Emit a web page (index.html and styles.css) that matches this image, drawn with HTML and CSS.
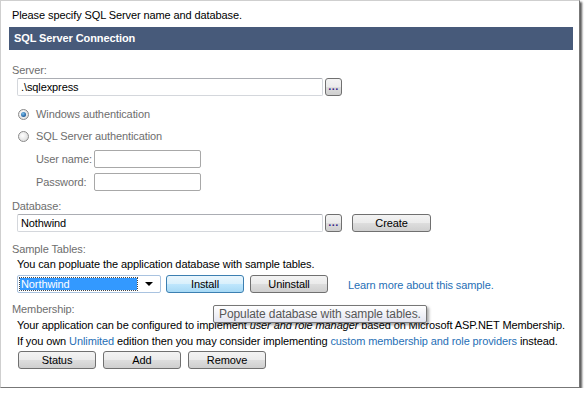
FILE: index.html
```html
<!DOCTYPE html>
<html>
<head>
<meta charset="utf-8">
<link rel="stylesheet" href="styles.css">
</head>
<body>
<div class="frame">
  <div class="intro">Please specify SQL Server name and database.</div>
  <div class="header">SQL Server Connection</div>

  <div class="label lbl-server">Server:</div>
  <div class="row">
    <div class="input wide">.\sqlexpress</div>
    <div class="btn dots">...</div>
  </div>

  <div class="radio-row r1"><span class="radio on"></span><span class="muted">Windows authentication</span></div>
  <div class="radio-row r2"><span class="radio"></span><span class="muted">SQL Server authentication</span></div>
  <div class="cred-row c1"><span class="cred-label muted">User name:</span><div class="input small"></div></div>
  <div class="cred-row c2"><span class="cred-label muted">Password:</span><div class="input small"></div></div>

  <div class="label lbl-db">Database:</div>
  <div class="row">
    <div class="input wide">Nothwind</div>
    <div class="btn dots">...</div>
    <div class="btn create">Create</div>
  </div>

  <div class="label lbl-sample">Sample Tables:</div>
  <div class="text t-sample">You can popluate the application database with sample tables.</div>
  <div class="row sample-row">
    <div class="select"><span class="sel-item">Northwind</span><span class="arrow"></span></div>
    <div class="btn mid hover">Install</div>
    <div class="btn mid uninstall">Uninstall</div>
    <a class="link learn">Learn more about this sample.</a>
  </div>

  <div class="label lbl-member">Membership:</div>
  <div class="member">
    <div class="text">Your application can be configured to implement <i>user and role manager</i> based on Microsoft ASP.NET Membership.</div>
    <div class="text">If you own <a class="link">Unlimited</a> edition then you may consider implementing <a class="link">custom membership and role providers</a> instead.</div>
    <div class="tooltip">Populate database with sample tables.</div>
  </div>
  <div class="row buttons">
    <div class="btn mid">Status</div>
    <div class="btn mid">Add</div>
    <div class="btn mid">Remove</div>
  </div>
</div>
</body>
</html>
```
FILE: styles.css
```css
* { box-sizing: border-box; }
html, body { margin: 0; padding: 0; background: #fff; }
body {
  font-family: "Liberation Sans", Arial, sans-serif;
  font-size: 11px;
  letter-spacing: -0.1px;
  color: #000;
  white-space: nowrap;
}
.frame {
  width: 580px;
  height: 388px;
  border-top: 1px solid #cfcfcf;
  border-left: 1px solid #cfcfcf;
  border-right: 1px solid #777;
  border-bottom: 1px solid #777;
  box-shadow: 2px 2px 2px rgba(0,0,0,0.65);
  padding: 7px 6px 0 8px;
  position: relative;
}
.intro { height: 14px; line-height: 14px; padding-left: 3px; }
.header {
  margin-top: 5px;
  height: 23px;
  width: 564px;
  background: #475a7a;
  color: #fff;
  font-weight: bold;
  line-height: 23px;
  padding-left: 5px;
}
.label { color: #6e6e6e; padding-left: 3px; height: 14px; line-height: 14px; }
.lbl-server { margin-top: 13px; }
.row { display: flex; align-items: center; margin-left: 8px; }
.input {
  height: 18px;
  border: 1px solid #d4d7dc;
  border-top-color: #abadb3;
  border-radius: 2px;
  line-height: 16px;
  padding-left: 3px;
  background: #fff;
}
.input.wide { width: 306px; margin-top: 1px; }
.input.small { width: 107px; border: 1px solid #a8a8a8; }
.btn {
  height: 18px;
  border: 1px solid #707070;
  border-radius: 3px;
  background: linear-gradient(#f3f3f3 0%, #ebebeb 48%, #dddddd 52%, #cfcfcf 100%);
  text-align: center;
  line-height: 16px;
  color: #000;
}
.btn.dots {
  width: 17px;
  margin-left: 2px;
  color: #3a2a8a;
  font-weight: bold;
  line-height: 14px;
  font-size: 11px;
  letter-spacing: 0.5px;
}
.btn.create { width: 79px; margin-left: 10px; }
.radio-row { display: flex; align-items: center; height: 22px; margin-left: 9px; }
.r1 { margin-top: 7px; }
.radio {
  width: 11px; height: 11px;
  border-radius: 50%;
  border: 1px solid #8a8a8a;
  background: radial-gradient(circle at 40% 40%, #fff 0%, #e6e6e6 60%, #cfcfcf 100%);
  margin-right: 7px;
  position: relative;
}
.radio.on::after {
  content: "";
  position: absolute;
  left: 2px; top: 2px;
  width: 5px; height: 5px;
  border-radius: 50%;
  background: radial-gradient(circle at 40% 35%, #7ec3f0 0%, #1f5d9c 70%, #0c3a6e 100%);
}
.muted { color: #6e6e6e; }
.cred-row { display: flex; align-items: center; margin-left: 27px; height: 23px; }
.cred-label { width: 58px; }
.lbl-db { margin-top: 6px; }
.lbl-db + .row { margin-top: 0px; }
.lbl-sample { margin-top: 10px; }
.text { height: 16px; line-height: 16px; padding-left: 8px; }
.t-sample { margin-top: 0px; }
.sample-row { margin-top: 3px; }
.select {
  width: 144px;
  height: 18px;
  border: 1px solid #a9c3e0;
  border-radius: 2px;
  position: relative;
  padding: 2px;
  background: #fff;
}
.sel-item {
  display: block;
  width: 117px;
  height: 12px;
  background: #3399ff;
  color: #fff;
  outline: 1px dotted #444;
  line-height: 12px;
  padding-left: 1px;
}
.arrow {
  position: absolute;
  right: 7px; top: 6px;
  border-left: 4px solid transparent;
  border-right: 4px solid transparent;
  border-top: 4px solid #000;
}
.btn.mid { width: 78px; }
.sample-row .btn.hover {
  margin-left: 5px;
  border-color: #3c7fb1;
  background: linear-gradient(#eaf6fd 0%, #d9f0fc 48%, #bee6fd 52%, #a7d9f5 100%);
}
.sample-row .uninstall { margin-left: 6px; }
.link { color: #1f6fb6; text-decoration: none; }
.learn { margin-left: 20px; margin-top: 2px; }
.lbl-member { margin-top: 9px; }
.member { position: relative; margin-top: 1px; }
.tooltip {
  position: absolute;
  left: 204px;
  top: -12px;
  width: 214px;
  height: 18px;
  border: 1px solid #767676;
  border-radius: 2px;
  background: linear-gradient(#ffffff, #e4e5f0);
  color: #575757;
  line-height: 16px;
  padding-left: 5px;
  font-size: 12px;
  box-shadow: 2px 2px 3px rgba(0,0,0,0.35);
}
.buttons { margin-top: 2px; margin-left: 9px; gap: 7px; }
```
